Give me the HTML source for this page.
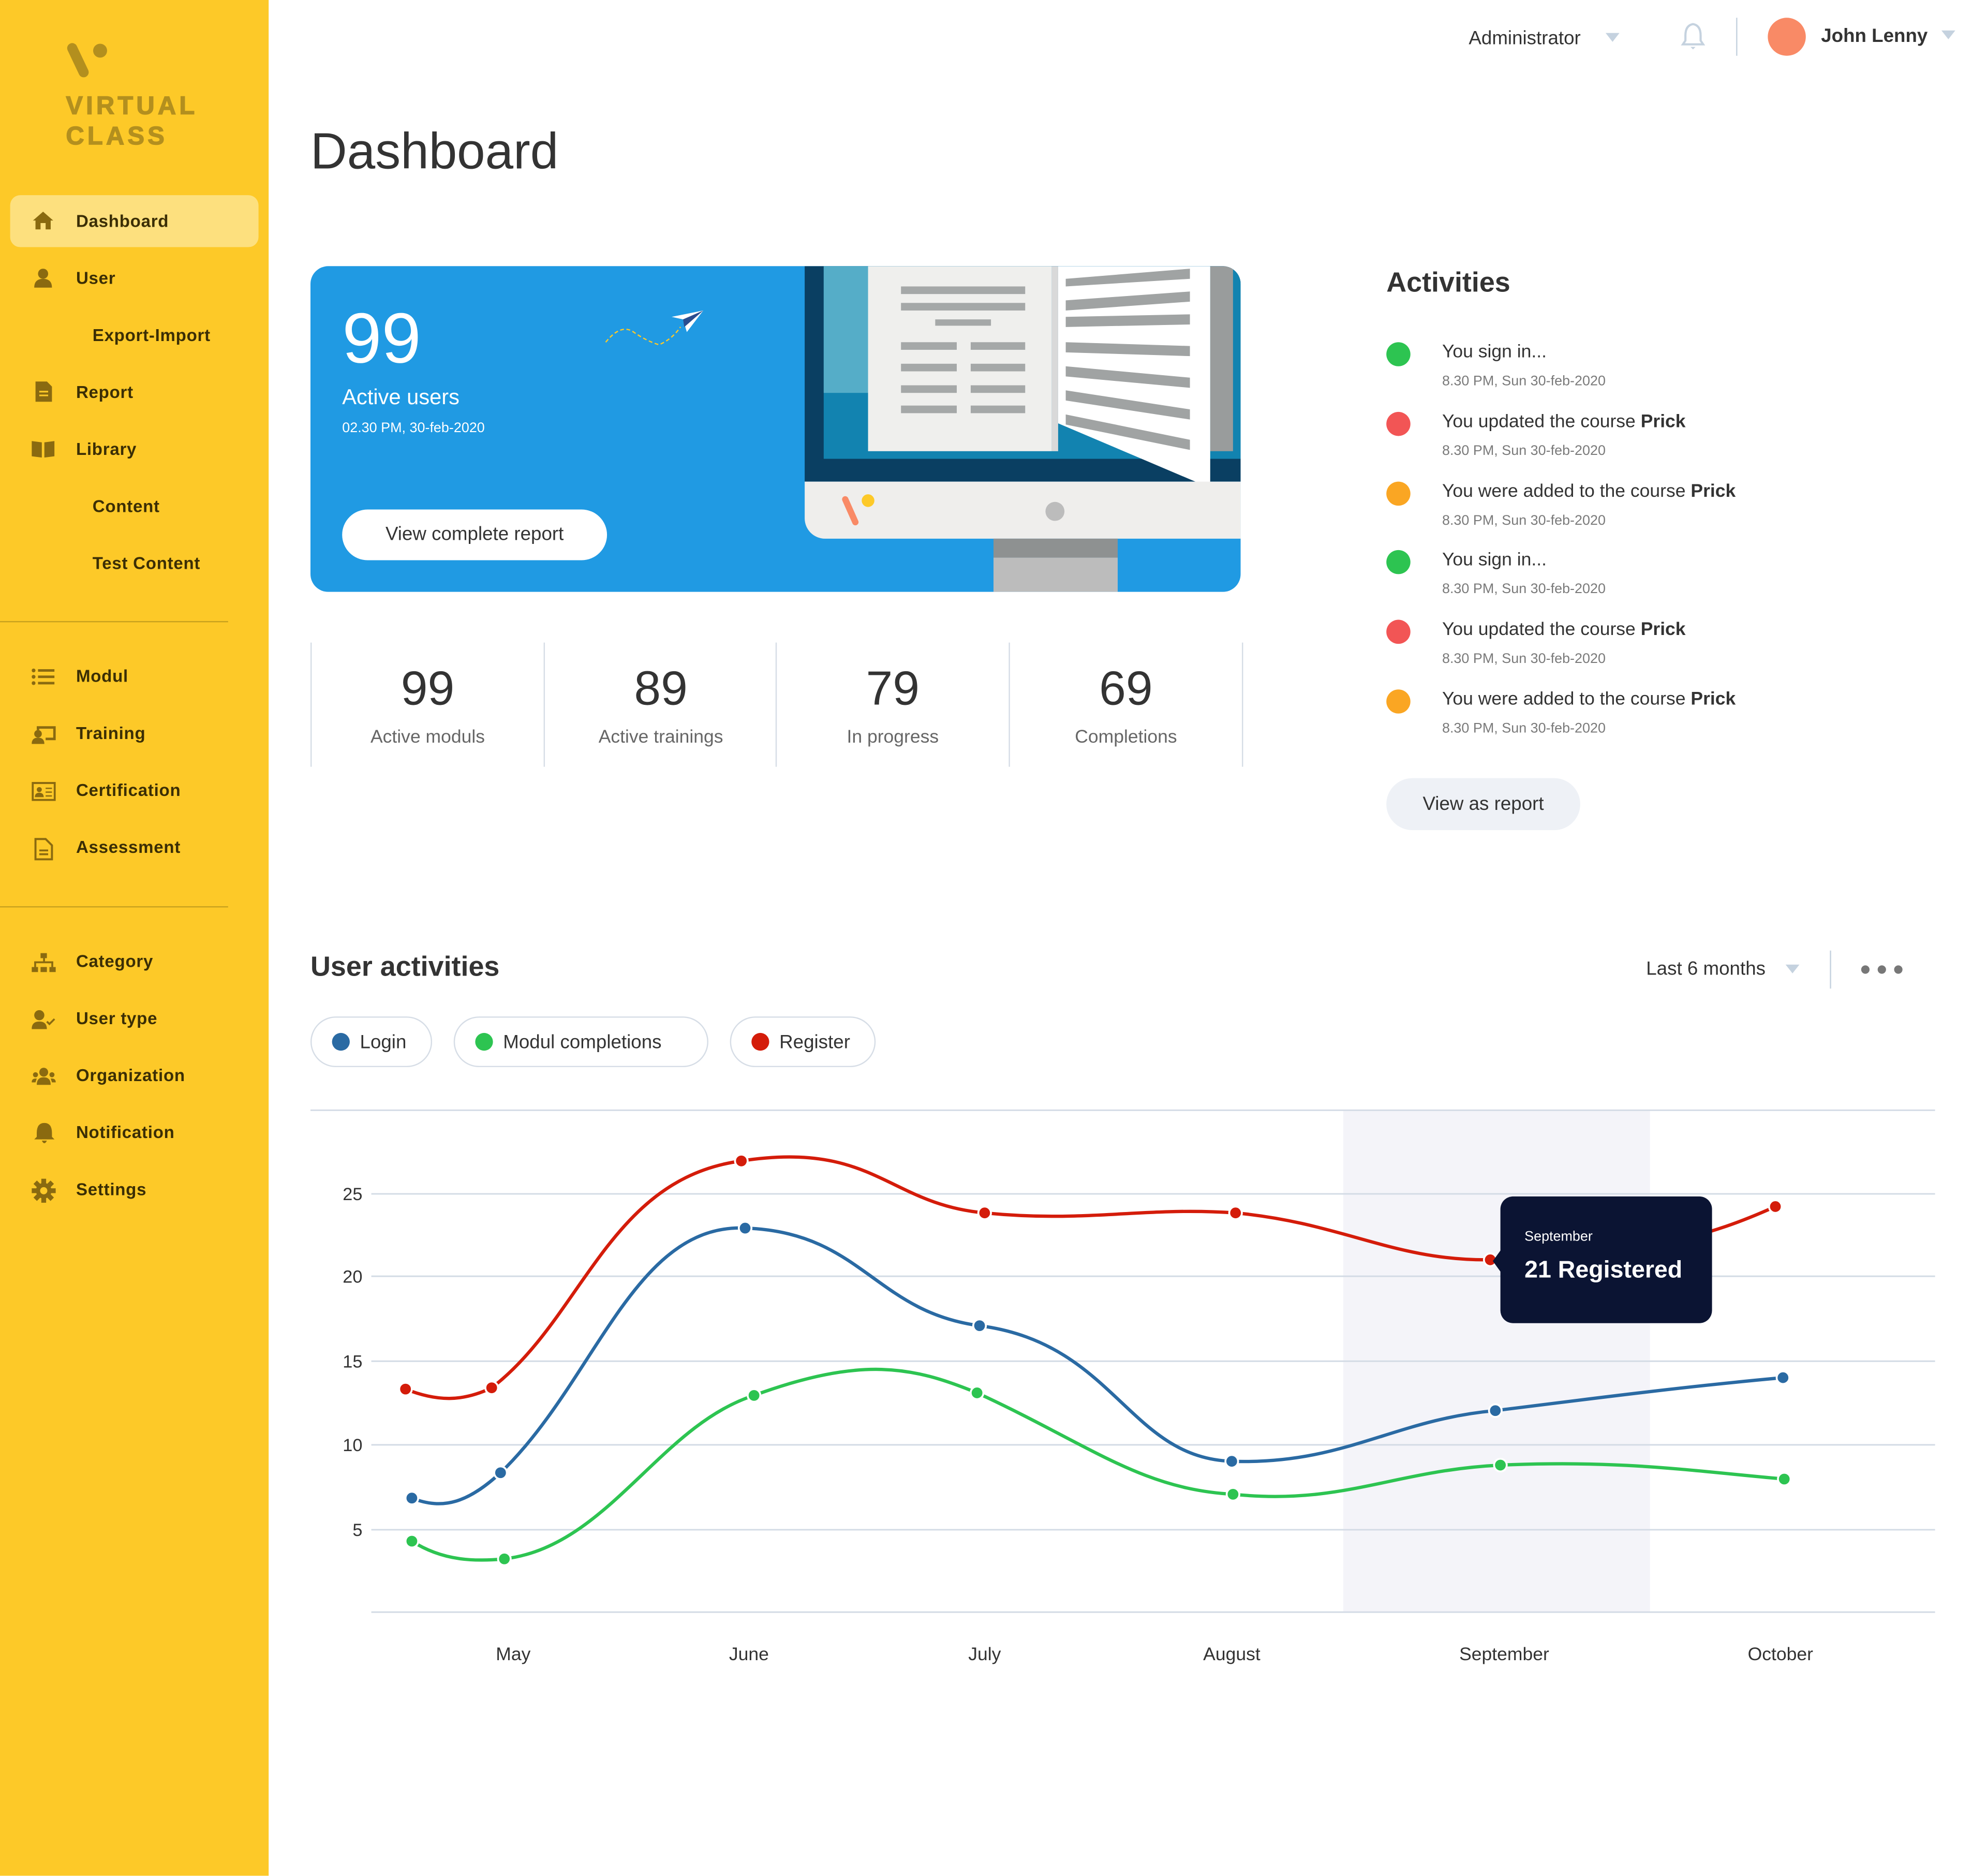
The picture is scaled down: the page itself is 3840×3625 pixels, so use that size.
<!DOCTYPE html>
<html><head><meta charset="utf-8">
<style>
html,body{margin:0;padding:0;background:#fff;width:3840px;height:3622px;overflow:hidden}
#s{position:absolute;left:0;top:0;width:1570px;height:1480px;transform:scale(2.449);transform-origin:0 0;font-family:"Liberation Sans",sans-serif;color:#333}
.a{position:absolute}
.side{left:0;top:0;width:212px;height:1480px;background:#fdc928}
.nav{position:absolute;left:60px;font-size:13.5px;font-weight:bold;color:#3b2e05;white-space:nowrap;letter-spacing:0.3px}
.ic{position:absolute;left:25px}
.act{position:absolute;left:1138px;font-size:14.5px;color:#333}
.ts{position:absolute;left:1138px;font-size:11px;color:#7a7a7a}
.dot{position:absolute;left:1094px;width:19px;height:19px;border-radius:50%}
.stat{position:absolute;top:507px;width:183px;height:98px;border-left:1px solid #d6dde6;text-align:center}
.stat b{display:block;font-size:38px;font-weight:normal;color:#333;margin-top:17px;line-height:40px;margin-bottom:9px}
.stat span{font-size:14.5px;color:#666}
.pill{position:absolute;top:802px;height:40px;border:1px solid #d6dde6;border-radius:20px;font-size:15px;color:#333;line-height:40px;box-sizing:border-box}
.pill i{display:inline-block;width:14px;height:14px;border-radius:50%;vertical-align:-2px;margin:0 8px 0 16px}
.yl{position:absolute;left:262px;font-size:14px;color:#333;width:24px;text-align:right}
.xl{position:absolute;top:1298px;font-size:14.5px;color:#333;transform:translateX(-50%)}
</style></head><body><div id="s">
<div class="a side">
 <svg class="a" style="left:50px;top:30px" width="40" height="35" viewBox="0 0 40 35"><line x1="7" y1="8" x2="16" y2="27" stroke="#b38f1e" stroke-width="8" stroke-linecap="round"/><circle cx="29" cy="10" r="5.5" fill="#b38f1e"/></svg>
 <div class="a" style="left:52px;top:72px;font-size:20px;font-weight:bold;letter-spacing:2.5px;color:#b38f1e;line-height:24px;-webkit-text-stroke:0.6px #b38f1e">VIRTUAL<br>CLASS</div>
 <div class="a" style="left:8px;top:154px;width:196px;height:41px;background:#fde07e;border-radius:8px"></div>
 <svg class="ic" style="top:166px" width="18" height="16"><path d="M9 1 L1 8 L3 8 L3 15 L7 15 L7 10 L11 10 L11 15 L15 15 L15 8 L17 8Z" fill="#8a6a10"/></svg>
 <div class="nav" style="top:167px">Dashboard</div>
 <svg class="ic" style="top:211px" width="18" height="16"><circle cx="9" cy="5" r="4" fill="#8a6a10"/><path d="M2 16 Q2 9 9 9 Q16 9 16 16Z" fill="#8a6a10"/></svg>
 <div class="nav" style="top:212px">User</div>
 <div class="nav" style="left:73px;top:257px">Export-Import</div>
 <svg class="ic" style="top:301px;left:28px" width="14" height="16"><path d="M0 0 H9 L13 4 V16 H0Z" fill="#8a6a10"/><path d="M3 8H10M3 11H10" stroke="#fdc928" stroke-width="1.3"/></svg>
 <div class="nav" style="top:302px">Report</div>
 <svg class="ic" style="top:347px" width="18" height="14"><path d="M0 1 L8 2 V14 L0 13Z M10 2 L18 1 V13 L10 14Z" fill="#8a6a10"/></svg>
 <div class="nav" style="top:347px">Library</div>
 <div class="nav" style="left:73px;top:392px">Content</div>
 <div class="nav" style="left:73px;top:437px">Test Content</div>
 <div class="a" style="left:0;top:490px;width:180px;height:1px;background:#c9a21e"></div>
 <svg class="ic" style="top:527px" width="18" height="14"><g fill="#8a6a10"><circle cx="1.5" cy="2" r="1.5"/><circle cx="1.5" cy="7" r="1.5"/><circle cx="1.5" cy="12" r="1.5"/><rect x="5" y="1" width="13" height="2"/><rect x="5" y="6" width="13" height="2"/><rect x="5" y="11" width="13" height="2"/></g></svg>
 <div class="nav" style="top:526px">Modul</div>
 <svg class="ic" style="top:572px" width="19" height="15"><g fill="#8a6a10"><circle cx="5" cy="7" r="3"/><path d="M0 15 Q0 10 5 10 Q10 10 10 15Z"/><path d="M4 1H19V12H11V10H17V3H6V4H4Z"/></g></svg>
 <div class="nav" style="top:571px">Training</div>
 <svg class="ic" style="top:617px" width="19" height="15"><rect x="0.8" y="0.8" width="17.4" height="13.4" fill="none" stroke="#8a6a10" stroke-width="1.6"/><circle cx="6" cy="6" r="2" fill="#8a6a10"/><path d="M2.5 12 Q2.5 8.5 6 8.5 Q9.5 8.5 9.5 12Z" fill="#8a6a10"/><path d="M11 5H16M11 8H16M11 11H16" stroke="#8a6a10"/></svg>
 <div class="nav" style="top:616px">Certification</div>
 <svg class="ic" style="top:661px;left:27px" width="15" height="18"><path d="M1 1H9L14 6V17H1Z" fill="none" stroke="#8a6a10" stroke-width="1.6"/><path d="M4 10H11M4 13H11" stroke="#8a6a10" stroke-width="1.5"/></svg>
 <div class="nav" style="top:661px">Assessment</div>
 <div class="a" style="left:0;top:715px;width:180px;height:1px;background:#c9a21e"></div>
 <svg class="ic" style="top:752px" width="19" height="15"><g fill="#8a6a10"><rect x="7" y="0" width="5" height="4"/><rect x="9" y="4" width="1.5" height="3"/><rect x="2" y="6.5" width="15" height="1.5"/><rect x="2" y="7" width="1.5" height="4"/><rect x="15.5" y="7" width="1.5" height="4"/><rect x="0" y="11" width="5" height="4"/><rect x="7" y="11" width="5" height="4"/><rect x="14" y="11" width="5" height="4"/></g></svg>
 <div class="nav" style="top:751px">Category</div>
 <svg class="ic" style="top:797px" width="19" height="15"><g fill="#8a6a10"><circle cx="6" cy="4" r="4"/><path d="M0 15 Q0 9 6 9 Q12 9 12 15Z"/></g><path d="M12 9 L14 11 L18 7" stroke="#8a6a10" stroke-width="1.5" fill="none"/></svg>
 <div class="nav" style="top:796px">User type</div>
 <svg class="ic" style="top:842px" width="19" height="14"><g fill="#8a6a10"><circle cx="9.5" cy="4" r="3.5"/><path d="M4 14 Q4 8 9.5 8 Q15 8 15 14Z"/><circle cx="3" cy="6" r="2"/><circle cx="16" cy="6" r="2"/><path d="M0 12 Q0 9 3 9 L4 9 L3 12Z M19 12 Q19 9 16 9 L15 9 L16 12Z"/></g></svg>
 <div class="nav" style="top:841px">Organization</div>
 <svg class="ic" style="top:885px;left:26px" width="18" height="18"><path d="M9 1 Q15 1 15 9 L15 12 L17 14 H1 L3 12 L3 9 Q3 1 9 1Z M7 15 H11 Q10 17 9 17 Q8 17 7 15Z" fill="#8a6a10"/></svg>
 <div class="nav" style="top:886px">Notification</div>
 <svg class="ic" style="top:930px" width="19" height="19" viewBox="-10 -10 20 20"><g fill="#8a6a10"><circle r="6.5"/><g id="t"><rect x="-2" y="-10" width="4" height="5"/></g><use href="#t" transform="rotate(45)"/><use href="#t" transform="rotate(90)"/><use href="#t" transform="rotate(135)"/><use href="#t" transform="rotate(180)"/><use href="#t" transform="rotate(225)"/><use href="#t" transform="rotate(270)"/><use href="#t" transform="rotate(315)"/></g><circle r="3" fill="#fdc928"/></svg>
 <div class="nav" style="top:931px">Settings</div>
</div>

<div class="a" style="left:1159px;top:22px;font-size:15px;color:#333">Administrator</div>
<svg class="a" style="left:1267px;top:26px" width="11" height="8"><path d="M0 0H11L5.5 7Z" fill="#c5d2df"/></svg>
<svg class="a" style="left:1325px;top:17px" width="22" height="24"><path d="M11 2 Q17 3 17 11 V15 L19 18 H3 L5 15 V11 Q5 3 11 2Z" fill="none" stroke="#c5d2df" stroke-width="1.7"/><path d="M9 20H13L11 22Z" fill="#c5d2df"/></svg>
<div class="a" style="left:1370px;top:14px;width:1px;height:30px;background:#c5d2df"></div>
<div class="a" style="left:1395px;top:14px;width:30px;height:30px;border-radius:50%;background:#f98a66"></div>
<div class="a" style="left:1437px;top:20px;font-size:15px;font-weight:bold;color:#333">John Lenny</div>
<svg class="a" style="left:1532px;top:24px" width="11" height="8"><path d="M0 0H11L5.5 7Z" fill="#c5d2df"/></svg>

<div class="a" style="left:245px;top:98px;font-size:40px;color:#333">Dashboard</div>

<div class="a" style="left:245px;top:210px;width:734px;height:257px;background:#209ae3;border-radius:14px;overflow:hidden">
 <div class="a" style="left:25px;top:26px;font-size:56px;color:#fff;line-height:62px">99</div>
 <div class="a" style="left:25px;top:94px;font-size:17px;color:#fff">Active users</div>
 <div class="a" style="left:25px;top:122px;font-size:11px;color:#fff">02.30 PM, 30-feb-2020</div>
 <div class="a" style="left:25px;top:192px;width:209px;height:40px;background:#fff;border-radius:20px;text-align:center;line-height:40px;font-size:15px;color:#333">View complete report</div>
 <svg class="a" style="left:230px;top:30px" width="100" height="45"><path d="M3 30 Q15 15 25 22 T45 32 Q55 28 62 18" stroke="#fdc928" stroke-width="1" stroke-dasharray="3 2" fill="none"/><path d="M55 10 L80 5 L67 22 L64 12Z" fill="#fff"/><path d="M64 12 L80 5 L65 18Z" fill="#2a4d8f"/></svg>
 <div class="a" style="left:390px;top:0;width:344px;height:170px;background:#0a3f62"></div>
 <div class="a" style="left:405px;top:0;width:329px;height:152px;background:#1283b0"></div>
 <div class="a" style="left:405px;top:0;width:50px;height:100px;background:#55adc8"></div>
 <div class="a" style="left:440px;top:0;width:145px;height:146px;background:#efefed"></div>
 <div class="a" style="left:585px;top:0;width:5px;height:146px;background:#d9d9d9"></div>
 <div class="a" style="left:710px;top:0;width:18px;height:146px;background:#999c9c"></div>
 <svg class="a" style="left:440px;top:0" width="300" height="180">
  <g fill="#a5a8a8"><rect x="26" y="16" width="98" height="6"/><rect x="26" y="29" width="98" height="6"/><rect x="53" y="42" width="44" height="5"/><rect x="26" y="60" width="44" height="6"/><rect x="81" y="60" width="43" height="6"/><rect x="26" y="77" width="44" height="6"/><rect x="81" y="77" width="43" height="6"/><rect x="26" y="94" width="44" height="6"/><rect x="81" y="94" width="43" height="6"/><rect x="26" y="110" width="44" height="6"/><rect x="81" y="110" width="43" height="6"/></g>
  <path d="M150 0 L270 0 L270 175 L150 124Z" fill="#fff"/>
  <g fill="#a0a3a3"><path d="M156 10 L254 2 L254 10 L156 16Z"/><path d="M156 27 L254 20 L254 28 L156 35Z"/><path d="M156 40 L254 38 L254 46 L156 48Z"/><path d="M156 60 L254 63 L254 71 L156 68Z"/><path d="M156 79 L254 88 L254 96 L156 87Z"/><path d="M156 98 L254 113 L254 121 L156 106Z"/><path d="M156 117 L254 137 L254 145 L156 125Z"/></g>
 </svg>
 <div class="a" style="left:390px;top:170px;width:344px;height:45px;background:#efeeec;border-bottom-left-radius:16px"></div>
 <svg class="a" style="left:410px;top:176px" width="40" height="34"><line x1="12" y1="8" x2="20" y2="26" stroke="#f98a66" stroke-width="5" stroke-linecap="round"/><circle cx="30" cy="9" r="5" fill="#fdc928"/></svg>
 <div class="a" style="left:580px;top:186px;width:15px;height:15px;border-radius:50%;background:#bcbcbc"></div>
 <div class="a" style="left:539px;top:215px;width:98px;height:15px;background:#8e9191"></div>
 <div class="a" style="left:539px;top:230px;width:98px;height:27px;background:#bcbcbc"></div>
</div>

<div class="stat" style="left:245px"><b>99</b><span>Active moduls</span></div>
<div class="stat" style="left:429px"><b>89</b><span>Active trainings</span></div>
<div class="stat" style="left:612px"><b>79</b><span>In progress</span></div>
<div class="stat" style="left:796px;border-right:1px solid #d6dde6"><b>69</b><span>Completions</span></div>

<div class="a" style="left:1094px;top:210px;font-size:22px;font-weight:bold;color:#333">Activities</div>
<div class="dot" style="top:270px;background:#2dc451"></div><div class="act" style="top:270px">You sign in...</div><div class="ts" style="top:295px">8.30 PM, Sun 30-feb-2020</div>
<div class="dot" style="top:325px;background:#f25555"></div><div class="act" style="top:325px">You updated the course <b>Prick</b></div><div class="ts" style="top:350px">8.30 PM, Sun 30-feb-2020</div>
<div class="dot" style="top:380px;background:#faa623"></div><div class="act" style="top:380px">You were added to the course <b>Prick</b></div><div class="ts" style="top:405px">8.30 PM, Sun 30-feb-2020</div>
<div class="dot" style="top:434px;background:#2dc451"></div><div class="act" style="top:434px">You sign in...</div><div class="ts" style="top:459px">8.30 PM, Sun 30-feb-2020</div>
<div class="dot" style="top:489px;background:#f25555"></div><div class="act" style="top:489px">You updated the course <b>Prick</b></div><div class="ts" style="top:514px">8.30 PM, Sun 30-feb-2020</div>
<div class="dot" style="top:544px;background:#faa623"></div><div class="act" style="top:544px">You were added to the course <b>Prick</b></div><div class="ts" style="top:569px">8.30 PM, Sun 30-feb-2020</div>
<div class="a" style="left:1094px;top:614px;width:153px;height:41px;border-radius:21px;background:#eef1f6;text-align:center;line-height:41px;font-size:15px;color:#333">View as report</div>

<div class="a" style="left:245px;top:750px;font-size:22px;font-weight:bold;color:#333">User activities</div>
<div class="a" style="left:1299px;top:756px;font-size:15px;color:#333">Last 6 months</div>
<svg class="a" style="left:1409px;top:761px" width="11" height="8"><path d="M0 0H11L5.5 7Z" fill="#c5d2df"/></svg>
<div class="a" style="left:1444px;top:750px;width:1px;height:30px;background:#c5d2df"></div>
<svg class="a" style="left:1467px;top:760px" width="38" height="10"><g fill="#777"><circle cx="5" cy="5" r="3.3"/><circle cx="18" cy="5" r="3.3"/><circle cx="31" cy="5" r="3.3"/></g></svg>
<div class="pill" style="left:245px;width:96px"><i style="background:#2a6aa3"></i>Login</div>
<div class="pill" style="left:358px;width:201px"><i style="background:#2dc451"></i>Modul completions</div>
<div class="pill" style="left:576px;width:115px"><i style="background:#d41c0a"></i>Register</div>

<svg class="a" style="left:0;top:0" width="1570" height="1480">
 <rect x="1060" y="876" width="242" height="396" fill="#f4f4f9"/>
 <g stroke="#d3dbe5" stroke-width="1.2"><line x1="245" y1="876" x2="1527" y2="876"/><line x1="293" y1="942" x2="1527" y2="942"/><line x1="293" y1="1007" x2="1527" y2="1007"/><line x1="293" y1="1074" x2="1527" y2="1074"/><line x1="293" y1="1140" x2="1527" y2="1140"/><line x1="293" y1="1207" x2="1527" y2="1207"/><line x1="293" y1="1272" x2="1527" y2="1272"/></g>
 <g fill="none" stroke-width="2.6">
  <path d="M320 1096 C345 1106 365 1106 388 1095 C460 1040 480 930 585 916 C690 900 700 950 777 957 C860 965 900 952 975 957 C1060 965 1100 995 1176 994 C1300 990 1350 975 1401 952" stroke="#d41c0a"/>
  <path d="M325 1182 C350 1192 370 1185 395 1162 C470 1090 500 965 588 969 C680 972 690 1035 773 1046 C880 1060 890 1150 972 1153 C1060 1156 1100 1120 1180 1113 C1260 1103 1330 1094 1407 1087" stroke="#2a6aa3"/>
  <path d="M325 1216 C350 1232 375 1232 398 1230 C480 1220 520 1125 595 1101 C680 1070 720 1078 771 1099 C860 1140 900 1175 973 1179 C1060 1188 1100 1160 1184 1156 C1280 1152 1330 1160 1408 1167" stroke="#2dc451"/>
 </g>
 <g stroke="#fff" stroke-width="1.5">
  <g fill="#d41c0a"><circle cx="320" cy="1096" r="5"/><circle cx="388" cy="1095" r="5"/><circle cx="585" cy="916" r="5"/><circle cx="777" cy="957" r="5"/><circle cx="975" cy="957" r="5"/><circle cx="1176" cy="994" r="5"/><circle cx="1401" cy="952" r="5"/></g>
  <g fill="#2a6aa3"><circle cx="325" cy="1182" r="5"/><circle cx="395" cy="1162" r="5"/><circle cx="588" cy="969" r="5"/><circle cx="773" cy="1046" r="5"/><circle cx="972" cy="1153" r="5"/><circle cx="1180" cy="1113" r="5"/><circle cx="1407" cy="1087" r="5"/></g>
  <g fill="#2dc451"><circle cx="325" cy="1216" r="5"/><circle cx="398" cy="1230" r="5"/><circle cx="595" cy="1101" r="5"/><circle cx="771" cy="1099" r="5"/><circle cx="973" cy="1179" r="5"/><circle cx="1184" cy="1156" r="5"/><circle cx="1408" cy="1167" r="5"/></g>
 </g>
 <rect x="1184" y="944" width="167" height="100" rx="10" fill="#0b1433"/>
 <path d="M1186 984 L1178 995 L1186 1006Z" fill="#0b1433"/>
 <text x="1203" y="979" font-family="Liberation Sans" font-size="11" fill="#fff">September</text>
 <text x="1203" y="1008" font-family="Liberation Sans" font-size="19" font-weight="bold" fill="#fff">21 Registered</text>
</svg>
<div class="yl" style="top:934px">25</div><div class="yl" style="top:999px">20</div><div class="yl" style="top:1066px">15</div><div class="yl" style="top:1132px">10</div><div class="yl" style="top:1199px">5</div>
<div class="xl" style="left:405px">May</div><div class="xl" style="left:591px">June</div><div class="xl" style="left:777px">July</div><div class="xl" style="left:972px">August</div><div class="xl" style="left:1187px">September</div><div class="xl" style="left:1405px">October</div>
</div></body></html>
